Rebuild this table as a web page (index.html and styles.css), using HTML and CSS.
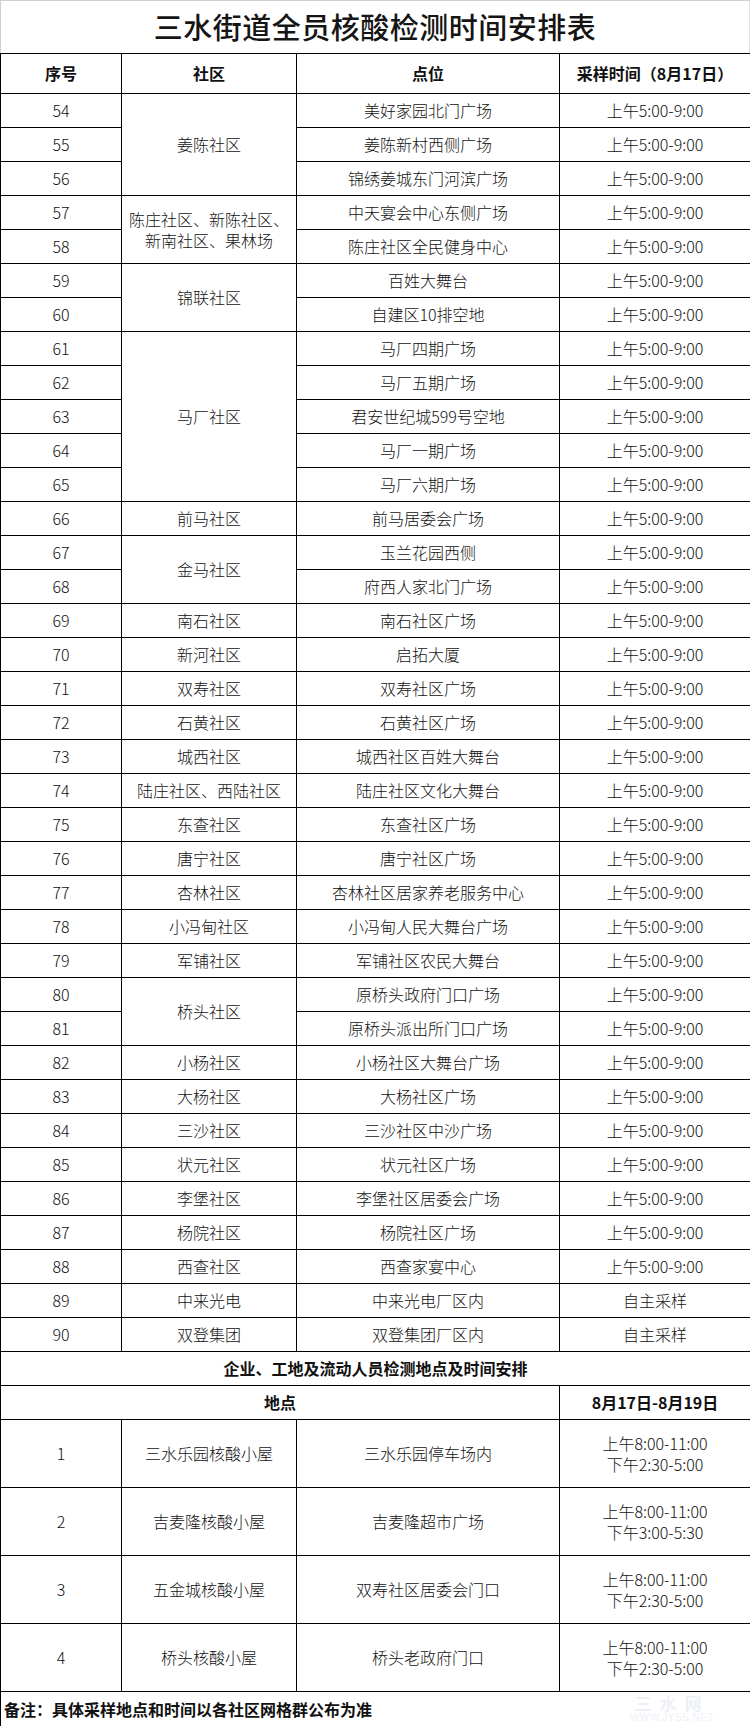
FILE: index.html
```html
<!DOCTYPE html>
<html lang="zh-CN">
<head>
<meta charset="utf-8">
<title>三水街道全员核酸检测时间安排表</title>
<link rel="stylesheet" href="styles.css">
</head>
<body>
<div class="page">
  <div class="title">三水街道全员核酸检测时间安排表</div>
  <table class="sheet">
    <colgroup>
      <col class="c1"><col class="c2"><col class="c3"><col class="c4">
    </colgroup>
    <tr class="head"><th>序号</th><th>社区</th><th>点位</th><th>采样时间（8月17日）</th></tr>
    <tr class="r"><td>54</td><td rowspan="3">姜陈社区</td><td>美好家园北门广场</td><td>上午5:00-9:00</td></tr>
    <tr class="r"><td>55</td><td>姜陈新村西侧广场</td><td>上午5:00-9:00</td></tr>
    <tr class="r"><td>56</td><td>锦绣姜城东门河滨广场</td><td>上午5:00-9:00</td></tr>
    <tr class="r"><td>57</td><td rowspan="2" class="multi">陈庄社区、新陈社区、<br>新南社区、果林场</td><td>中天宴会中心东侧广场</td><td>上午5:00-9:00</td></tr>
    <tr class="r"><td>58</td><td>陈庄社区全民健身中心</td><td>上午5:00-9:00</td></tr>
    <tr class="r"><td>59</td><td rowspan="2">锦联社区</td><td>百姓大舞台</td><td>上午5:00-9:00</td></tr>
    <tr class="r"><td>60</td><td>自建区10排空地</td><td>上午5:00-9:00</td></tr>
    <tr class="r"><td>61</td><td rowspan="5">马厂社区</td><td>马厂四期广场</td><td>上午5:00-9:00</td></tr>
    <tr class="r"><td>62</td><td>马厂五期广场</td><td>上午5:00-9:00</td></tr>
    <tr class="r"><td>63</td><td>君安世纪城599号空地</td><td>上午5:00-9:00</td></tr>
    <tr class="r"><td>64</td><td>马厂一期广场</td><td>上午5:00-9:00</td></tr>
    <tr class="r"><td>65</td><td>马厂六期广场</td><td>上午5:00-9:00</td></tr>
    <tr class="r"><td>66</td><td>前马社区</td><td>前马居委会广场</td><td>上午5:00-9:00</td></tr>
    <tr class="r"><td>67</td><td rowspan="2">金马社区</td><td>玉兰花园西侧</td><td>上午5:00-9:00</td></tr>
    <tr class="r"><td>68</td><td>府西人家北门广场</td><td>上午5:00-9:00</td></tr>
    <tr class="r"><td>69</td><td>南石社区</td><td>南石社区广场</td><td>上午5:00-9:00</td></tr>
    <tr class="r"><td>70</td><td>新河社区</td><td>启拓大厦</td><td>上午5:00-9:00</td></tr>
    <tr class="r"><td>71</td><td>双寿社区</td><td>双寿社区广场</td><td>上午5:00-9:00</td></tr>
    <tr class="r"><td>72</td><td>石黄社区</td><td>石黄社区广场</td><td>上午5:00-9:00</td></tr>
    <tr class="r"><td>73</td><td>城西社区</td><td>城西社区百姓大舞台</td><td>上午5:00-9:00</td></tr>
    <tr class="r"><td>74</td><td>陆庄社区、西陆社区</td><td>陆庄社区文化大舞台</td><td>上午5:00-9:00</td></tr>
    <tr class="r"><td>75</td><td>东查社区</td><td>东查社区广场</td><td>上午5:00-9:00</td></tr>
    <tr class="r"><td>76</td><td>唐宁社区</td><td>唐宁社区广场</td><td>上午5:00-9:00</td></tr>
    <tr class="r"><td>77</td><td>杏林社区</td><td>杏林社区居家养老服务中心</td><td>上午5:00-9:00</td></tr>
    <tr class="r"><td>78</td><td>小冯甸社区</td><td>小冯甸人民大舞台广场</td><td>上午5:00-9:00</td></tr>
    <tr class="r"><td>79</td><td>军铺社区</td><td>军铺社区农民大舞台</td><td>上午5:00-9:00</td></tr>
    <tr class="r"><td>80</td><td rowspan="2">桥头社区</td><td>原桥头政府门口广场</td><td>上午5:00-9:00</td></tr>
    <tr class="r"><td>81</td><td>原桥头派出所门口广场</td><td>上午5:00-9:00</td></tr>
    <tr class="r"><td>82</td><td>小杨社区</td><td>小杨社区大舞台广场</td><td>上午5:00-9:00</td></tr>
    <tr class="r"><td>83</td><td>大杨社区</td><td>大杨社区广场</td><td>上午5:00-9:00</td></tr>
    <tr class="r"><td>84</td><td>三沙社区</td><td>三沙社区中沙广场</td><td>上午5:00-9:00</td></tr>
    <tr class="r"><td>85</td><td>状元社区</td><td>状元社区广场</td><td>上午5:00-9:00</td></tr>
    <tr class="r"><td>86</td><td>李堡社区</td><td>李堡社区居委会广场</td><td>上午5:00-9:00</td></tr>
    <tr class="r"><td>87</td><td>杨院社区</td><td>杨院社区广场</td><td>上午5:00-9:00</td></tr>
    <tr class="r"><td>88</td><td>西查社区</td><td>西查家宴中心</td><td>上午5:00-9:00</td></tr>
    <tr class="r"><td>89</td><td>中来光电</td><td>中来光电厂区内</td><td>自主采样</td></tr>
    <tr class="r"><td>90</td><td>双登集团</td><td>双登集团厂区内</td><td>自主采样</td></tr>
    <tr class="r bold"><td colspan="4">企业、工地及流动人员检测地点及时间安排</td></tr>
    <tr class="r bold"><td colspan="3">地点</td><td>8月17日-8月19日</td></tr>
    <tr class="big"><td>1</td><td>三水乐园核酸小屋</td><td>三水乐园停车场内</td><td class="multi">上午8:00-11:00<br>下午2:30-5:00</td></tr>
    <tr class="big"><td>2</td><td>吉麦隆核酸小屋</td><td>吉麦隆超市广场</td><td class="multi">上午8:00-11:00<br>下午3:00-5:30</td></tr>
    <tr class="big"><td>3</td><td>五金城核酸小屋</td><td>双寿社区居委会门口</td><td class="multi">上午8:00-11:00<br>下午2:30-5:00</td></tr>
    <tr class="big"><td>4</td><td>桥头核酸小屋</td><td>桥头老政府门口</td><td class="multi">上午8:00-11:00<br>下午2:30-5:00</td></tr>
    <tr class="note"><td colspan="4">备注：具体采样地点和时间以各社区网格群公布为准</td></tr>
  </table>
  <div class="watermark">
    <div class="wm-big">三水网</div>
    <div class="wm-small">WWW.JYSS.NET</div>
  </div>
</div>
</body>
</html>
```

FILE: styles.css
```css
html, body {
  margin: 0;
  padding: 0;
  background: #ffffff;
}

body {
  font-family: "Noto Sans CJK SC", "Noto Sans", sans-serif;
  color: #111111;
}

.page {
  position: relative;
  width: 750px;
  height: 1726px;
  overflow: hidden;
}

.title {
  box-sizing: border-box;
  height: 53px;
  border-top: 1px solid #d0d0d0;
  border-left: 1px solid #d0d0d0;
  border-right: 1px solid #e4e4e4;
  text-align: center;
  font-size: 29px;
  line-height: 50px;
  font-weight: 500;
  letter-spacing: 0.5px;
  color: #151515;
}

.sheet {
  width: 750px;
  border-collapse: collapse;
  table-layout: fixed;
}

.c1 { width: 121px; }
.c2 { width: 175px; }
.c3 { width: 263px; }
.c4 { width: 191px; }

.sheet th,
.sheet td {
  border: 1px solid #000000;
  padding: 0;
  text-align: center;
  vertical-align: middle;
  font-size: 16px;
  font-weight: 300;
  line-height: 19px;
}

.head th {
  height: 39px;
  font-size: 16px;
  font-weight: 700;
}

.r td {
  height: 33px;
}

.bold td {
  font-weight: 700;
}

.big td {
  height: 67px;
}

.sheet td.multi {
  line-height: 21px;
}

.note td {
  height: 34px;
  text-align: left;
  padding-left: 3px;
  font-weight: 700;
}

.watermark {
  position: absolute;
  left: 622px;
  top: 1693px;
  width: 100px;
  text-align: center;
  color: #edf1f7;
  pointer-events: none;
}

.wm-big {
  font-size: 17px;
  line-height: 19px;
  font-weight: 700;
  letter-spacing: 8px;
}

.wm-small {
  font-family: "Liberation Sans", sans-serif;
  font-size: 10px;
  line-height: 11px;
  letter-spacing: 0.5px;
}
```
